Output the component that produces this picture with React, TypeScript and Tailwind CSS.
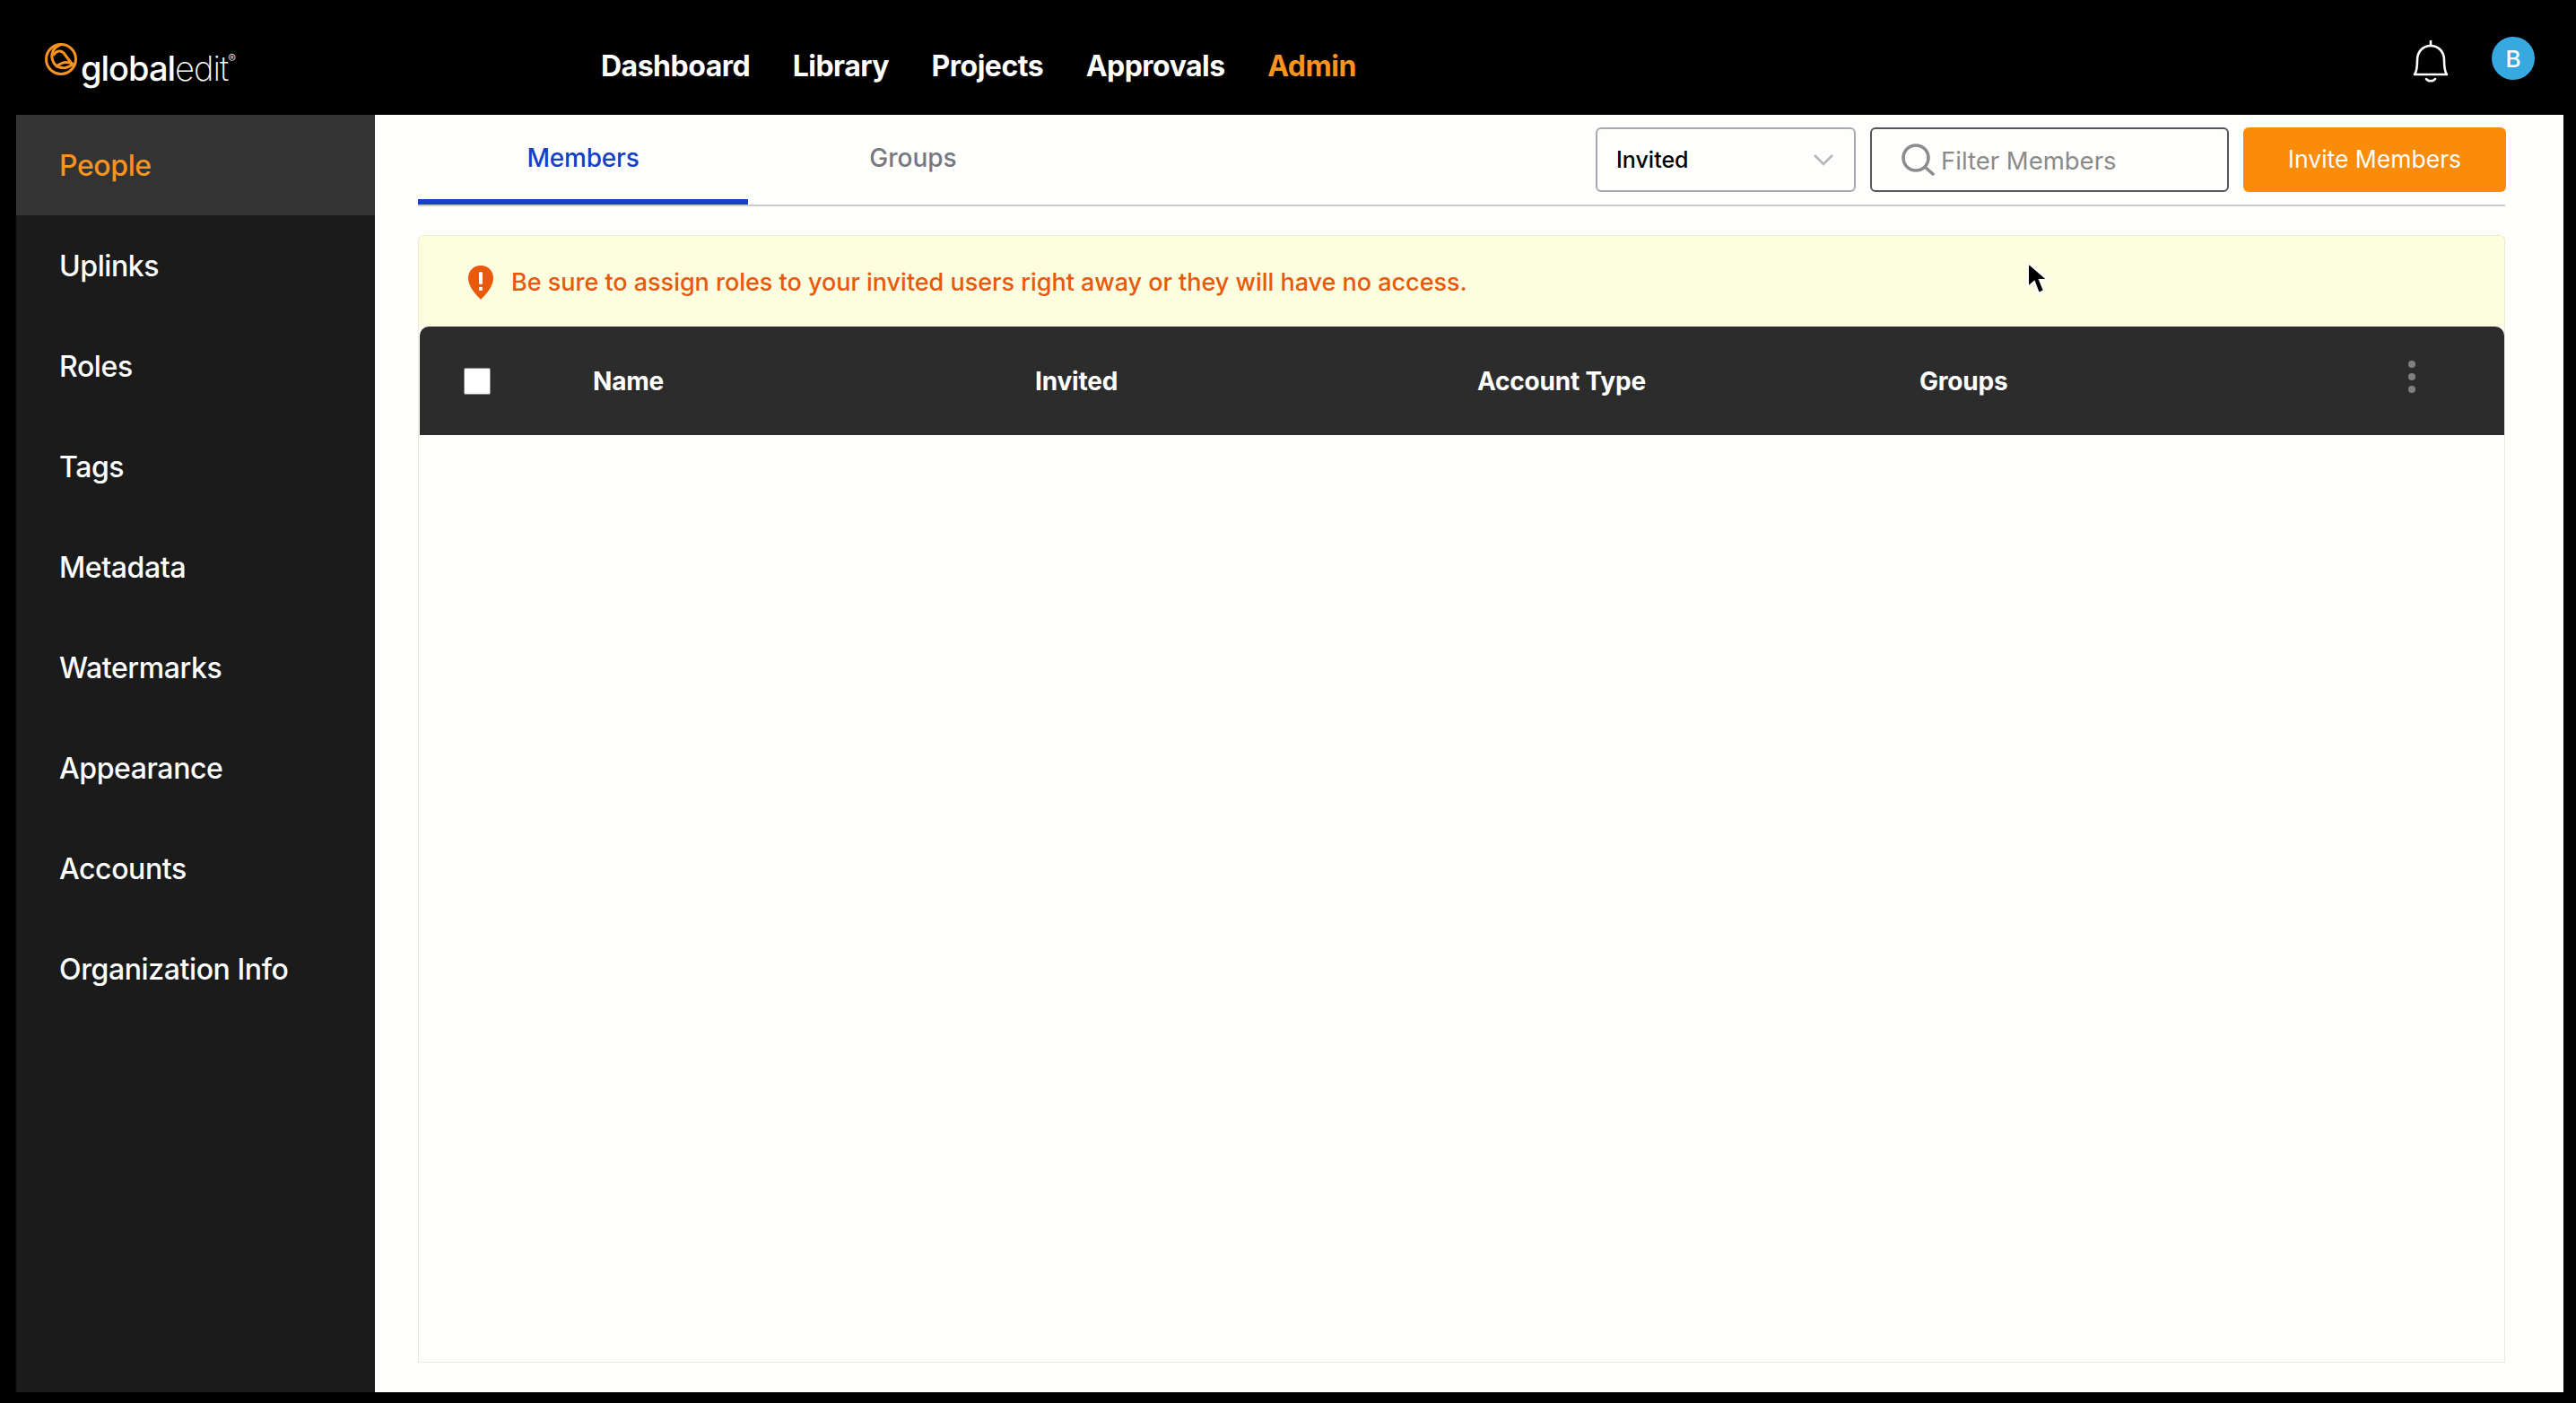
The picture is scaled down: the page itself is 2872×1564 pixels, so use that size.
import React from "react";

const nav = ["Dashboard", "Library", "Projects", "Approvals"];
const side = ["Uplinks", "Roles", "Tags", "Metadata", "Watermarks", "Appearance", "Accounts", "Organization Info"];

function LogoMark() {
  return (
    <svg width="38" height="38" viewBox="0 0 38 38" fill="none" stroke="#f7931e" strokeWidth="3" strokeLinecap="round" className="absolute left-[49px] top-[47px]">
      <circle cx="19" cy="19" r="16.5" />
      <path d="M18 3 C10 6 7 14 10 21 C12 27 19 30 26 28 C29 27 31 26 33 24" />
      <path d="M11 14 C14 9 19 9 22 12 L31 24" />
      <path d="M31 24 C25 21 19 23 14 27" />
    </svg>
  );
}

function Bell() {
  return (
    <svg width="40" height="48" viewBox="0 0 40 48" fill="none" stroke="#fff" strokeWidth="2.6" strokeLinecap="round" strokeLinejoin="round" className="mt-[8px]">
      <path d="M20 1 V6" />
      <path d="M2 38 H38 C35 34 35 28 35 22 C35 12 28 6 20 6 C12 6 5 12 5 22 C5 28 5 34 2 38 Z" />
      <path d="M15 43 C17 46 23 46 25 43" />
    </svg>
  );
}

function Cursor() {
  return (
    <svg width="30" height="42" viewBox="0 0 30 42" className="absolute left-[2258px] top-[290px]">
      <path d="M3 3 V30 L10 24 L15 37 L21 34 L16 22 L25 22 Z" fill="#000" stroke="#fff" strokeWidth="2" />
    </svg>
  );
}

export default function App() {
  return (
    <div className="relative w-full h-[1564px] bg-black flex flex-col overflow-hidden font-[Inter,sans-serif]">
      <header className="h-[128px] flex items-center shrink-0 relative">
        <LogoMark />
        <div className="absolute left-[90px] top-[52px] text-[38px] leading-[48px] tracking-[-1px] text-white font-medium">
          global<span className="font-extralight">edit</span>
          <sup className="text-[13px] font-light align-super">®</sup>
        </div>
        <nav className="ml-[670px] pt-[20px] flex items-center gap-[47.5px]">
          {nav.map((n) => (
            <span key={n} className="text-[32px] font-bold tracking-[-0.5px] text-white">{n}</span>
          ))}
          <span className="text-[32px] font-bold tracking-[-0.5px] text-[#f7931e]">Admin</span>
        </nav>
        <div className="ml-auto mr-[46px] pt-[2px] flex items-center gap-[48px]">
          <Bell />
          <div className="w-[48px] h-[48px] rounded-full bg-[#36a9e1] flex items-center justify-center text-white text-[26px] font-medium">B</div>
        </div>
      </header>
      <div className="flex flex-1 pl-[18px] pr-[14px] pb-[12px] min-h-0">
        <aside className="w-[400px] shrink-0 bg-[#1b1b1c] flex flex-col">
          <div className="h-[112px] flex items-center pl-[48px] pt-[2px] bg-[#333333] text-[32px] tracking-[-0.4px] font-medium text-[#f7931e]">People</div>
          {side.map((s) => (
            <div key={s} className="h-[112px] flex items-center pl-[48px] pt-[2px] text-[32px] tracking-[-0.4px] font-medium text-white">{s}</div>
          ))}
        </aside>
        <main className="flex-1 bg-[#fefefd] pl-[48px] pr-[65px] flex flex-col">
          <div className="h-[102px] shrink-0 flex border-b-2 border-[#cdcdcd]">
            <div className="w-[368px] h-[100px] flex items-center justify-center pt-[2px] border-b-[6px] border-[#1440c8] text-[28px] font-medium tracking-[-0.2px] text-[#1440c8]">Members</div>
            <div className="w-[368px] h-[100px] flex items-center justify-center pt-[2px] border-b-[6px] border-transparent text-[28px] font-medium text-[#77777f]">Groups</div>
            <div className="ml-auto mr-[-1px] flex gap-[16px] pt-[14px] h-[86px]">
              <div className="w-[290px] h-[72px] border-2 border-[#a8a8ae] rounded-[6px] flex items-center justify-between pl-[21px] pr-[23px]">
                <span className="text-[25px] pt-[2px] font-medium text-black">Invited</span>
                <svg width="22" height="14" viewBox="0 0 22 14" fill="none" stroke="#b5b5bd" strokeWidth="2.5"><path d="M1 2 L11 12 L21 2" /></svg>
              </div>
              <div className="w-[400px] h-[72px] border-2 border-[#55555a] rounded-[6px] flex items-center pl-[32px] gap-[7px]">
                <svg width="38" height="38" viewBox="0 0 38 38" fill="none" stroke="#8c8c8c" strokeWidth="3.5" strokeLinecap="round"><circle cx="17" cy="17" r="14" /><path d="M27 27 L36 35" /></svg>
                <span className="text-[27.5px] pt-[4px] text-[#8a8a8a]">Filter Members</span>
              </div>
              <div className="w-[293px] h-[72px] bg-[#fa8c0a] rounded-[6px] flex items-center justify-center text-[26.5px] text-white">Invite Members</div>
            </div>
          </div>
          <div className="mt-[32px] flex-1 flex flex-col mb-[33px]">
            <div className="h-[102px] shrink-0 bg-[#fdfde0] border border-b-0 border-[#ecebd0] rounded-t-[6px] flex items-center pl-[54px] gap-[19px]">
              <svg width="30" height="40" viewBox="0 0 30 40" className="shrink-0 mt-[2px]">
                <path d="M15 1 C7 1 1 7 1 15 C1 24 9 33 15 39 C21 33 29 24 29 15 C29 7 23 1 15 1 Z" fill="#e8590c" />
                <rect x="13" y="8" width="4" height="14" rx="1.5" fill="#fff" />
                <circle cx="15" cy="27" r="2.2" fill="#fff" />
              </svg>
              <span className="text-[27px] pt-[4px] font-medium tracking-[-0.02px] text-[#e8590c]">Be sure to assign roles to your invited users right away or they will have no access.</span>
            </div>
            <div className="flex-1 flex flex-col border border-t-0 border-[#e9e9e0]">
              <div className="h-[121px] shrink-0 ml-[1px] bg-[#2c2c2c] rounded-t-[10px] flex items-center relative">
                <div className="ml-[49px] w-[30px] h-[30px] bg-white rounded-[2px] border border-[#888] shrink-0" />
                <div className="ml-[114px] flex">
                  {["Name", "Invited", "Account Type", "Groups"].map((c) => (
                    <div key={c} className="w-[493px] text-[28px] font-bold tracking-[-0.2px] text-white">{c}</div>
                  ))}
                </div>
                <div className="absolute left-[2217px] top-[38px] flex flex-col gap-[6px]">
                  <div className="w-[8px] h-[8px] rounded-full bg-[#808080]" />
                  <div className="w-[8px] h-[8px] rounded-full bg-[#808080]" />
                  <div className="w-[8px] h-[8px] rounded-full bg-[#808080]" />
                </div>
              </div>
            </div>
          </div>
        </main>
      </div>
      <Cursor />
    </div>
  );
}
